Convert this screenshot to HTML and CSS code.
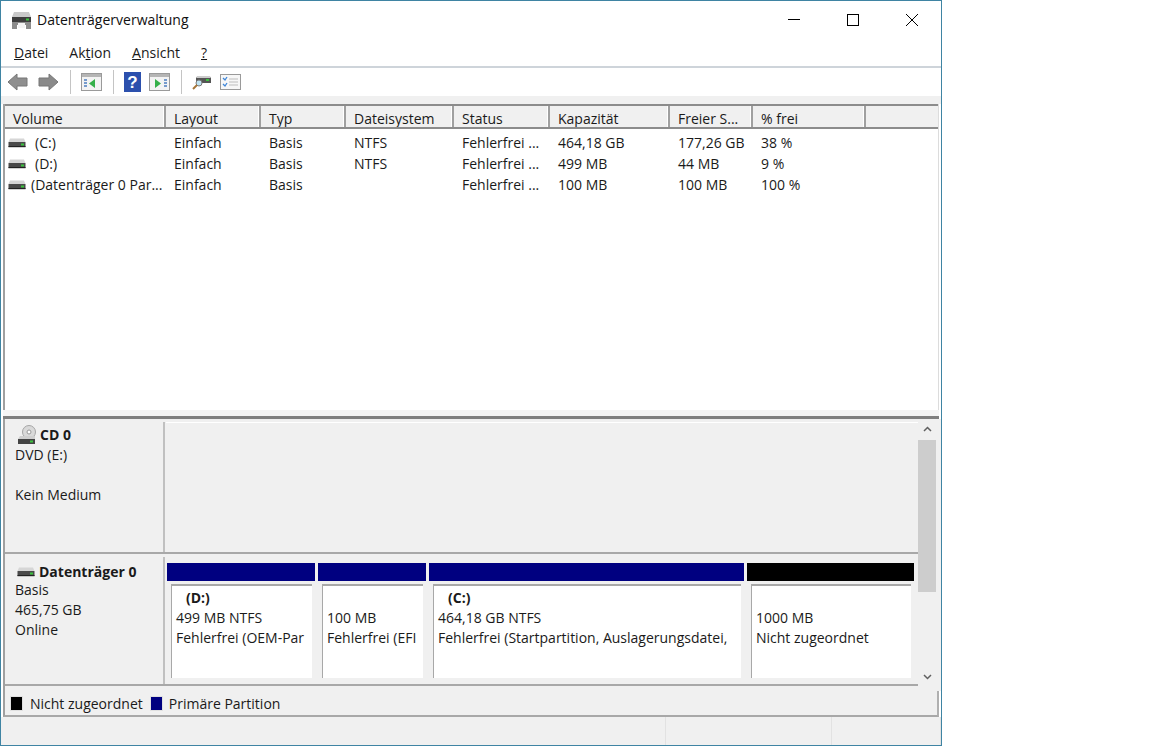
FILE: index.html
```html
<!DOCTYPE html>
<html lang="de">
<head>
  <meta charset="UTF-8">
  <title>Datenträgerverwaltung</title>
  <link rel="stylesheet" href="styles.css">
</head>
<body>
  <svg class="defs" width="0" height="0">
    <symbol id="hdd" viewBox="0 0 18 10">
      <path d="M2 0.5h14l1.5 3.5h-17z" fill="#d6d6d6"/>
      <rect x="0.5" y="4" width="17" height="5" fill="#4a4a4a"/>
      <rect x="0.5" y="8" width="17" height="1.2" fill="#222"/>
      <rect x="13" y="5.5" width="3" height="2" fill="#39c43c"/>
    </symbol>
  </svg>
  <div class="window">
    <header class="titlebar">
      <svg class="app-icon" width="21" height="20" viewBox="0 0 21 20">
        <path d="M3 2h15l2 5H1z" fill="#c9c9c9"/>
        <rect x="1" y="7" width="19" height="5" fill="#3d3d3d"/>
        <rect x="15" y="8.500" width="3" height="2" fill="#3bc43e"/>
        <path d="M1 12h19v7h-5v-4H6v4H1z" fill="#8c8c8c"/>
        <rect x="7" y="13" width="7" height="5" fill="#f4f4f4"/>
      </svg>
      <span class="title">Datenträgerverwaltung</span>
      <div class="caption">
        <svg width="12" height="12" viewBox="0 0 12 12"><path d="M0 5.500h12" stroke="#000" fill="none"/></svg>
        <svg width="12" height="12" viewBox="0 0 12 12"><rect x="0.500" y="0.500" width="11" height="11" stroke="#000" fill="none"/></svg>
        <svg width="12" height="12" viewBox="0 0 12 12"><path d="M0 0l12 12M12 0L0 12" stroke="#000" fill="none"/></svg>
      </div>
    </header>

    <nav class="menubar">
      <span><u>D</u>atei</span>
      <span>Ak<u>t</u>ion</span>
      <span><u>A</u>nsicht</span>
      <span><u>?</u></span>
    </nav>

    <div class="toolbar">
      <svg class="tool" width="22" height="20" viewBox="0 0 22 20"><path d="M1 10l9-8v4h10v8H10v4z" fill="#8f8f8f" stroke="#777"/></svg>
      <svg class="tool gap-sm" width="22" height="20" viewBox="0 0 22 20"><path d="M21 10l-9-8v4H2v8h10v4z" fill="#8a8a8a" stroke="#777"/></svg>
      <i class="sep"></i>
      <svg class="tool" width="21" height="18" viewBox="0 0 21 18">
        <rect x="0.500" y="0.500" width="20" height="17" fill="#f3f3f3" stroke="#9a9a9a"/>
        <rect x="1" y="1" width="19" height="3" fill="#b5b5b5"/>
        <path d="M14 6v9l-6-4.500z" fill="#35b04a"/>
        <path d="M3 7h3M3 10h3M3 13h3" stroke="#4d7fc0" stroke-width="1.500"/>
      </svg>
      <i class="sep"></i>
      <svg class="tool" width="17" height="20" viewBox="0 0 17 20">
        <rect width="17" height="20" fill="#2c50ad"/>
        <text x="8.500" y="16" class="help-mark">?</text>
      </svg>
      <svg class="tool" width="21" height="18" viewBox="0 0 21 18">
        <rect x="0.500" y="0.500" width="20" height="17" fill="#f3f3f3" stroke="#9a9a9a"/>
        <rect x="1" y="1" width="19" height="3" fill="#b5b5b5"/>
        <path d="M6 6v9l6-4.500z" fill="#35b04a"/>
        <path d="M15 7h3M15 10h3M15 13h3" stroke="#4d7fc0" stroke-width="1.500"/>
      </svg>
      <i class="sep"></i>
      <svg class="tool" width="20" height="18" viewBox="0 0 20 18">
        <path d="M4 4h15v6H4z" fill="#555"/>
        <path d="M5 3h13l1 2H4z" fill="#ccc"/>
        <rect x="14" y="6" width="3" height="2" fill="#3bc43e"/>
        <circle cx="7" cy="10" r="3" fill="#bfe3f2" stroke="#7a7a7a"/>
        <path d="M5 12l-4 4" stroke="#a5763a" stroke-width="2"/>
      </svg>
      <svg class="tool" width="21" height="16" viewBox="0 0 21 16">
        <rect x="0.500" y="0.500" width="20" height="15" fill="#f7f7f7" stroke="#9a9a9a"/>
        <path d="M3 4l2 2 2-3M3 10l2 2 2-3" stroke="#3f86d8" fill="none" stroke-width="1.300"/>
        <path d="M9 5h9M9 8h9M9 11h9" stroke="#bdbdbd"/>
      </svg>
    </div>

    <div class="strip"></div>

    <section class="volumes">
      <div class="row head">
        <div>Volume</div><div>Layout</div><div>Typ</div><div>Dateisystem</div><div>Status</div><div>Kapazität</div><div>Freier S...</div><div>% frei</div><div></div>
      </div>
      <div class="row">
        <div class="vol"><svg width="18" height="10"><use href="#hdd"/></svg><span class="indent">(C:)</span></div><div>Einfach</div><div>Basis</div><div>NTFS</div><div>Fehlerfrei ...</div><div>464,18 GB</div><div>177,26 GB</div><div>38 %</div><div></div>
      </div>
      <div class="row">
        <div class="vol"><svg width="18" height="10"><use href="#hdd"/></svg><span class="indent">(D:)</span></div><div>Einfach</div><div>Basis</div><div>NTFS</div><div>Fehlerfrei ...</div><div>499 MB</div><div>44 MB</div><div>9 %</div><div></div>
      </div>
      <div class="row">
        <div class="vol"><svg width="18" height="10"><use href="#hdd"/></svg><span>(Datenträger 0 Par...</span></div><div>Einfach</div><div>Basis</div><div></div><div>Fehlerfrei ...</div><div>100 MB</div><div>100 MB</div><div>100 %</div><div></div>
      </div>
    </section>

    <div class="splitter"></div>

    <section class="disks">
      <div class="disk-list">
        <div class="disk cd">
          <div class="disk-info">
            <div class="disk-name">
              <svg width="19" height="20" viewBox="0 0 19 20">
                <circle cx="12" cy="7" r="6.500" fill="#d9d9d9" stroke="#a5a5a5"/>
                <circle cx="12" cy="7" r="2" fill="#fff" stroke="#999"/>
                <path d="M3 11h15v3H1z" fill="#cfcfcf"/>
                <rect x="1" y="14" width="17" height="5" fill="#444"/>
                <rect x="13" y="15.500" width="3" height="2" fill="#3bc43e"/>
              </svg>
              <b>CD 0</b>
            </div>
            <div>DVD (E:)</div>
            <div class="blank"></div>
            <div>Kein Medium</div>
          </div>
          <div class="disk-body"></div>
        </div>
        <div class="disk main">
          <div class="disk-info">
            <div class="disk-name">
              <svg width="18" height="10"><use href="#hdd"/></svg>
              <b>Datenträger 0</b>
            </div>
            <div>Basis</div>
            <div>465,75 GB</div>
            <div>Online</div>
          </div>
          <div class="disk-body parts">
            <div class="part p-d">
              <div class="bar"></div>
              <div class="box"><b class="drive">(D:)</b><div>499 MB NTFS</div><div class="clip">Fehlerfrei (OEM-Par</div></div>
            </div>
            <div class="part p-efi">
              <div class="bar"></div>
              <div class="box"><div class="drive"></div><div>100 MB</div><div class="clip">Fehlerfrei (EFI</div></div>
            </div>
            <div class="part p-c">
              <div class="bar"></div>
              <div class="box"><b class="drive">(C:)</b><div>464,18 GB NTFS</div><div class="clip">Fehlerfrei (Startpartition, Auslagerungsdatei,</div></div>
            </div>
            <div class="part p-free">
              <div class="bar black"></div>
              <div class="box"><div class="drive"></div><div>1000 MB</div><div class="clip">Nicht zugeordnet</div></div>
            </div>
          </div>
        </div>
      </div>
      <div class="scrollbar">
        <svg width="9" height="6" viewBox="0 0 9 6"><path d="M1 5l3.500-3.500L8 5" stroke="#606060" stroke-width="1.500" fill="none"/></svg>
        <div class="thumb"></div>
        <div class="track"></div>
        <svg width="9" height="6" viewBox="0 0 9 6"><path d="M1 1l3.500 3.500L8 1" stroke="#606060" stroke-width="1.500" fill="none"/></svg>
      </div>
    </section>

    <div class="legend">
      <span class="swatch black"></span><span>Nicht zugeordnet</span>
      <span class="swatch blue"></span><span>Primäre Partition</span>
    </div>

    <footer class="statusbar">
      <div></div><div></div><div></div>
    </footer>
  </div>
</body>
</html>
```

FILE: styles.css
```css
*{box-sizing: border-box;}
html, body{margin: 0; height: 100%; background: #fff;}
body{
  font-family: "Open Sans", "Noto Sans", sans-serif;
  font-size: 14px;
  color: #1a1a1a;
  overflow: hidden;
}
.defs{display: block; height: 0;}
b{font-weight: 700;}

.window{
  width: 942px; height: 746px;
  border: 1px solid #3f84a3;
  display: flex;
  flex-direction: column;
  background: #fff;
}

/* title */
.titlebar{
  height: 37px;
  display: flex;
  align-items: center;
  padding-left: 10px;
  flex: none;
}
.title{margin-left: 5px; font-size: 14px; color: #111;}
.caption{
  margin-left: auto;
  display: flex;
  gap: 47px;
  padding-right: 23px;
  align-items: center;
}

/* menu */
.menubar{
  height: 30px;
  display: flex;
  align-items: center;
  gap: 21px;
  padding-left: 13px;
  border-bottom: 2px solid #ced4da;
  flex: none;
}

/* toolbar */
.toolbar{
  height: 28px;
  display: flex;
  align-items: center;
  padding-left: 6px;
  flex: none;
}
.tool{margin-right: 8px; flex: none;}
.sep{width: 1px; height: 24px; background: #c4c4c4; margin: 0 10px 0 3px; flex: none;}
.help-mark{font-family: "Liberation Sans", sans-serif; font-size: 17px; font-weight: 700; fill: #fff; text-anchor: middle;}

.strip{height: 8px; background: #f0f0f0; flex: none;}

/* volume list */
.volumes{
  height: 306px;
  flex: none;
  margin: 0 2px 0 2px;
  background: #fff;
  border-left: 2px solid #a0a0a0;
  border-right: 1px solid #dcdcdc;
}
.row{
  display: grid;
  grid-template-columns: 161px 95px 85px 108px 96px 120px 83px 113px 1fr;
  height: 21px;
  line-height: 21px;
}
.row > div{padding-left: 8px; white-space: nowrap; overflow: hidden;}
.row.head{
  height: 25px;
  line-height: 26px;
  margin-bottom: 3px;
  background: #f0f0f0;
  border-top: 2px solid #8c8c8c;
  border-bottom: 2px solid #8c8c8c;
}
.row.head > div{border-right: 2px solid #a0a0a0; box-shadow: inset -1px 0 0 #fff;}
.row.head > div:last-child{border-right: none; box-shadow: none;}
.row .vol{
  padding-left: 3px;
  display: flex;
  align-items: center;
  gap: 5px;
}
.vol svg{flex: none;}
.vol .indent{margin-left: 4px;}

.splitter{
  height: 9px;
  flex: none;
  margin: 0 2px;
  background: #f5f5f5;
  border-bottom: 3px solid #808080;
}

/* graphic view */
.disks{
  height: 272px;
  flex: none;
  display: flex;
  margin-left: 2px;
  background: #f0f0f0;
  border-left: 2px solid #a0a0a0;
}
.disk-list{width: 913px; flex: none; display: flex; flex-direction: column;}
.disk{display: flex; border-bottom: 2px solid #a8a8a8; padding-top: 3px;}
.disk.cd{height: 135px;}
.disk.main{height: 132px;}
.disk-info{
  width: 160px;
  flex: none;
  padding: 3px 0 0 10px;
  line-height: 20px;
  background: #f0f0f0;
  border-right: 2px solid #c0c0c0;
}
.disk-name{display: flex; align-items: center; gap: 4px; height: 20px; margin-left: 2px;}
.disk.main .disk-name{padding-top: 3px; height: 21px; margin-bottom: -1px;}
.blank{height: 20px;}
.disk-body{flex: 1; background: #f0f0f0; margin-left: 1px; border-top: 1px solid #fff;}

.parts{display: flex; padding: 6px 3px 6px 1px; gap: 3px; border-top: none;}
.part{display: flex; flex-direction: column;}
.p-d{width: 148px;}
.p-efi{width: 108px;}
.p-c{width: 315px;}
.p-free{width: 167px;}
.bar{height: 18px; background: #000080; flex: none;}
.bar.black{background: #000;}
.box{
  flex: 1;
  margin: 3px 3px 0 4px;
  padding: 2px 0 0 4px;
  background: #fff;
  border-top: 2px solid #a8a8a8;
  border-left: 1px solid #a8a8a8;
  line-height: 20px;
  overflow: hidden;
  box-shadow: 0 0 0 1px #f0f0f0;
}
.drive{display: block; height: 20px; padding-left: 10px; margin-left: 0;}
.clip{white-space: nowrap; overflow: hidden;}

/* scrollbar */
.scrollbar{
  width: 18px;
  flex: none;
  display: flex;
  flex-direction: column;
  align-items: center;
  padding-top: 7px;
}
.thumb{width: 100%; height: 152px; background: #cdcdcd; margin-top: 8px;}
.track{flex: 1;}
.scrollbar svg:last-child{margin-bottom: 11px;}

/* legend */
.legend{
  height: 26px;
  flex: none;
  margin: 0 2px;
  display: flex;
  align-items: center;
  background: #f0f0f0;
  border-left: 2px solid #a0a0a0;
  border-right: 2px solid #b0b0b0;
  border-bottom: 2px solid #a8a8a8;
  padding-left: 5px;
}
.swatch{width: 13px; height: 15px; border: 1px solid #e0e0e0; margin-right: 7px; flex: none;}
.swatch.black{background: #000;}
.swatch.blue{background: #000080; margin-left: 7px; margin-right: 6px;}

.statusbar{
  flex: 1;
  display: flex;
  background: #f0f0f0;
}
.statusbar div{border-right: 1px solid #e2e2e2;}
.statusbar div:nth-child(1){width: 665px;}
.statusbar div:nth-child(2){width: 166px;}
.statusbar div:nth-child(3){flex: 1;}
```
